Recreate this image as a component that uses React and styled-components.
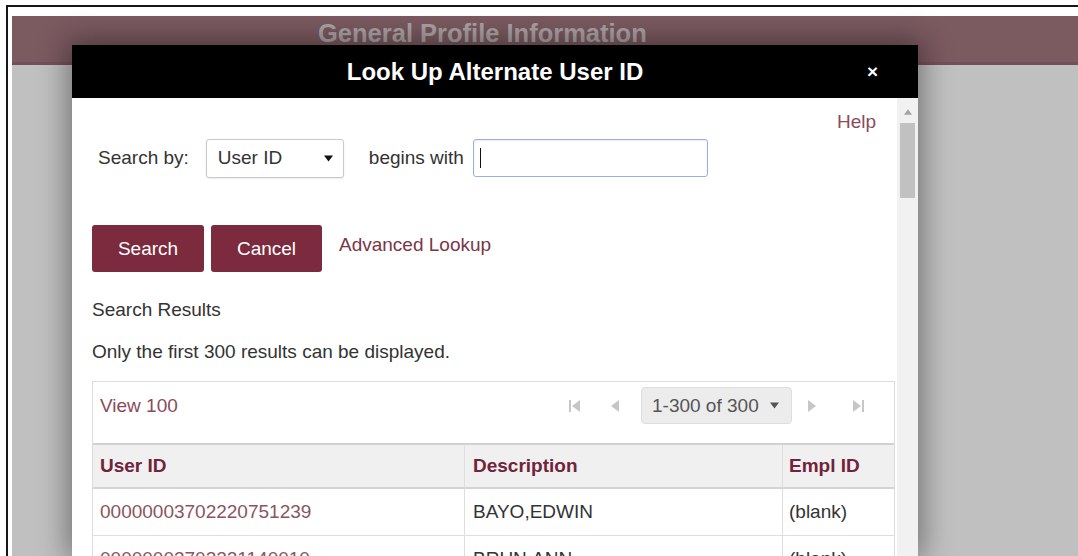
import React from 'react';
import styled, { createGlobalStyle } from 'styled-components';

const GlobalStyle = createGlobalStyle`
  html, body, #root {
    width: 100%;
    height: 100%;
  }
  html {
    overflow: hidden;
  }
  body {
    margin: 0;
    background: #fff;
    font-family: 'Liberation Sans', Arial, sans-serif;
    font-size: 19px;
    color: #333;
    overflow: hidden;
  }
  * {
    box-sizing: border-box;
  }
`;

const Shell = styled.div`
  height: 100%;
  padding: 5px 0 0 6px;
`;

const Frame = styled.div`
  height: 100%;
  border-top: 2px solid #161616;
  border-left: 2px solid #161616;
  padding: 9px 0 0 4px;
`;

const Page = styled.div`
  position: relative; // parent of the modal
  height: 100%;
  background: #c0c0c0;
`;

const Banner = styled.div`
  height: 49px;
  background: #7b5a60;
  border-bottom: 3px solid #74505a;
  padding: 2px 0 0 306px;
  font-size: 25.5px;
  line-height: 30px;
  font-weight: bold;
  color: #aca4a6;
`;

const Modal = styled.div`
  position: absolute; // sits over the page
  left: 60px;
  top: 29px;
  bottom: 0;
  width: 846px;
  display: flex;
  flex-direction: column;
  background: #fff;
  box-shadow: 0 0 28px 4px rgba(0, 0, 0, 0.42);
`;

const ModalHeader = styled.div`
  height: 53px;
  flex-shrink: 0;
  background: #000;
  color: #fff;
  display: grid;
  grid-template-columns: 1fr auto 1fr;
  align-items: center;
`;

const ModalTitle = styled.div`
  grid-column: 2;
  font-size: 24px;
  font-weight: bold;
`;

const Close = styled.div`
  justify-self: end;
  margin-right: 40px;
  font-size: 19px;
  font-weight: bold;
  cursor: pointer;
`;

const ModalBody = styled.div`
  flex: 1;
  display: flex;
  overflow: hidden;
`;

const Content = styled.div`
  flex: 1;
  padding: 0 2px 0 20px;
  line-height: 22px;
`;

const Scrollbar = styled.div`
  width: 21px;
  flex-shrink: 0;
  background: #f1f1f1;
  display: flex;
  flex-direction: column;
  align-items: center;
`;

const ScrollArrow = styled.div`
  height: 18px;
  display: flex;
  align-items: flex-end;
  justify-content: center;
`;

const Thumb = styled.div`
  margin-top: 7px;
  width: 15px;
  height: 75px;
  background: #c1c1c1;
`;

const HelpRow = styled.div`
  display: flex;
  justify-content: flex-end;
  padding: 13px 19px 0 0;
`;

const Link = styled.a`
  color: ${(props) => props.color || '#8b4b5b'};
  text-decoration: none;
  cursor: pointer;
`;

const SearchRow = styled.div`
  margin-top: 5px;
  height: 40px;
  display: flex;
  align-items: center;
  padding-left: 6px;
`;

const Label = styled.span`
  margin: ${(props) => props.margin || '0'};
`;

const Select = styled.div`
  width: 138px;
  height: 39px;
  border: 1px solid #c9c9c9;
  border-radius: 3px;
  background: #fff;
  box-shadow: 0 1px 2px rgba(0, 0, 0, 0.08);
  display: flex;
  align-items: center;
  justify-content: space-between;
  padding: 0 10px 0 11px;
`;

// focused text box, drawn with its caret showing
const TextBox = styled.div`
  width: 235px;
  height: 38px;
  border: 1px solid #9aaee6;
  border-radius: 3px;
  padding: 0 6px;
  display: flex;
  align-items: center;
  box-shadow: inset 0 1px 2px rgba(0, 0, 0, 0.08);
`;

const Caret = styled.span`
  width: 1px;
  height: 20px;
  background: #111;
`;

const ButtonRow = styled.div`
  margin-top: 47px;
  display: flex;
  align-items: flex-start;
  gap: 7px;
`;

const Button = styled.button`
  width: ${(props) => props.width}px;
  height: 47px;
  border: none;
  border-radius: 3px;
  background: #7b2b3d;
  color: #fff;
  font: inherit;
  cursor: pointer;
`;

const AdvancedLink = styled(Link)`
  margin: 9px 0 0 10px;
`;

const Heading = styled.div`
  margin-top: 27px;
`;

const Note = styled.div`
  margin-top: 20px;
`;

const Grid = styled.div`
  margin-top: 18px;
  border: 1px solid #dcdcdc;
  border-bottom: none;
`;

const Toolbar = styled.div`
  display: flex;
  align-items: center;
  padding: 5px 29px 19px 7px;
  border-bottom: 2px solid #d2d2d2;
`;

const Pager = styled.div`
  margin-left: auto;
  display: flex;
  align-items: center;
`;

const PagerIcon = styled.span`
  display: flex;
  margin: ${(props) => props.margin};
`;

const PageSelect = styled.div`
  height: 37px;
  width: 151px;
  border: 1px solid #dedede;
  border-radius: 4px;
  background: #ececec;
  color: #555;
  display: flex;
  align-items: center;
  justify-content: space-between;
  padding: 0 12px 0 10px;
`;

const Row = styled.div`
  display: grid;
  grid-template-columns: 372px 318px 1fr;
  height: ${(props) => (props.head ? '44px' : '47px')};
  background: ${(props) => (props.head ? '#f0f0f0' : '#fff')};
  border-bottom: ${(props) => (props.head ? '2px solid #d4d4d4' : '1px solid #dedede')};
  font-weight: ${(props) => (props.head ? 'bold' : 'normal')};
  color: ${(props) => (props.head ? '#72233a' : '#333')};
`;

const Cell = styled.div`
  display: flex;
  align-items: center;
  padding-left: ${(props) => props.pad || 7}px;
  border-right: 1px solid #dedede;
  &:last-child {
    border-right: none;
  }
`;

const CellLink = styled.span`
  color: #8a5560;
`;

function Triangle({ dir, color, size = 12 }) {
  const pts = {
    left: '10,0 10,12 2,6',
    right: '2,0 2,12 10,6',
    down: '0,2 12,2 6,10',
    up: '0,10 12,10 6,2',
  };
  return (
    <svg width={size} height={size} viewBox='0 0 12 12'>
      <polygon points={pts[dir]} fill={color} />
    </svg>
  );
}

function EdgeArrow({ dir }) {
  // pager "first" / "last" buttons: a bar plus a triangle
  return (
    <svg width='14' height='14' viewBox='0 0 14 14'>
      {dir === 'left' ? (
        <>
          <rect x='1' y='1' width='2' height='12' fill='#c6c6c6' />
          <polygon points='12,1 12,13 4,7' fill='#c6c6c6' />
        </>
      ) : (
        <>
          <polygon points='2,1 2,13 10,7' fill='#c6c6c6' />
          <rect x='11' y='1' width='2' height='12' fill='#c6c6c6' />
        </>
      )}
    </svg>
  );
}

const results = [
  { id: '00000003702220751239', name: 'BAYO,EDWIN', empl: '(blank)' },
  { id: '00000003702221140010', name: 'BRUN,ANN', empl: '(blank)' },
  { id: '00000003702221256843', name: 'CHEN,LIN', empl: '(blank)' },
  { id: '00000003702221379902', name: 'DAVIS,MARK', empl: '(blank)' },
];

export default function App() {
  return (
    <Shell>
      <GlobalStyle />
      <Frame>
        <Page>
          <Banner>General Profile Information</Banner>
          <Modal>
            <ModalHeader>
              <ModalTitle>Look Up Alternate User ID</ModalTitle>
              <Close>×</Close>
            </ModalHeader>
            <ModalBody>
              <Content>
                <HelpRow>
                  <Link>Help</Link>
                </HelpRow>
                <SearchRow>
                  <Label margin='0 17px 0 0'>Search by:</Label>
                  <Select>
                    <span>User ID</span>
                    <Triangle dir='down' color='#111' size={9} />
                  </Select>
                  <Label margin='0 9px 0 25px'>begins with</Label>
                  <TextBox>
                    <Caret />
                  </TextBox>
                </SearchRow>
                <ButtonRow>
                  <Button width={112}>Search</Button>
                  <Button width={111}>Cancel</Button>
                  <AdvancedLink color='#7b3646'>Advanced Lookup</AdvancedLink>
                </ButtonRow>
                <Heading>Search Results</Heading>
                <Note>Only the first 300 results can be displayed.</Note>
                <Grid>
                  <Toolbar>
                    <Link>View 100</Link>
                    <Pager>
                      <PagerIcon margin='0 27px 0 0'>
                        <EdgeArrow dir='left' />
                      </PagerIcon>
                      <PagerIcon margin='0 20px 0 0'>
                        <Triangle dir='left' color='#c6c6c6' />
                      </PagerIcon>
                      <PageSelect>
                        <span>1-300 of 300</span>
                        <Triangle dir='down' color='#555' size={9} />
                      </PageSelect>
                      <PagerIcon margin='0 33px 0 14px'>
                        <Triangle dir='right' color='#c6c6c6' />
                      </PagerIcon>
                      <PagerIcon>
                        <EdgeArrow dir='right' />
                      </PagerIcon>
                    </Pager>
                  </Toolbar>
                  <Row head>
                    <Cell>User ID</Cell>
                    <Cell pad={8}>Description</Cell>
                    <Cell pad={6}>Empl ID</Cell>
                  </Row>
                  {results.map((r) => (
                    <Row key={r.id}>
                      <Cell>
                        <CellLink>{r.id}</CellLink>
                      </Cell>
                      <Cell pad={8}>{r.name}</Cell>
                      <Cell pad={6}>{r.empl}</Cell>
                    </Row>
                  ))}
                </Grid>
              </Content>
              <Scrollbar>
                <ScrollArrow>
                  <Triangle dir='up' color='#a3a3a3' size={8} />
                </ScrollArrow>
                <Thumb />
              </Scrollbar>
            </ModalBody>
          </Modal>
        </Page>
      </Frame>
    </Shell>
  );
}
